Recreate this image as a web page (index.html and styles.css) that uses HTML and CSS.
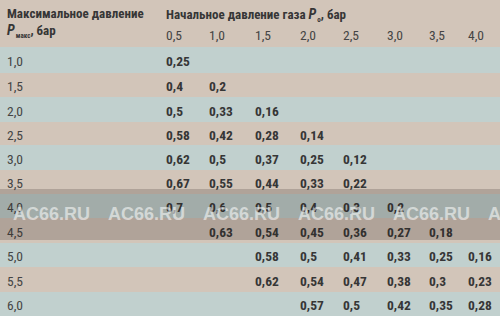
FILE: index.html
```html
<!DOCTYPE html>
<html lang="ru">
<head>
<meta charset="utf-8">
<link rel="stylesheet" href="styles.css">
</head>
<body>
<div class="page">
  <div class="grid">
    <div class="hd-left">Максимальное давление<br><i>P</i><sub>макс</sub>, бар</div>
    <div class="hd-top">Начальное давление газа <i>P</i><sub>o</sub>, бар</div>
    <div class="lbl">0,5</div><div class="lbl">1,0</div><div class="lbl">1,5</div><div class="lbl">2,0</div><div class="lbl">2,5</div><div class="lbl">3,0</div><div class="lbl">3,5</div><div class="lbl">4,0</div>

    <div class="row t"><span class="k">1,0</span><b>0,25</b><b></b><b></b><b></b><b></b><b></b><b></b><b></b></div>
    <div class="row s"><span class="k">1,5</span><b>0,4</b><b>0,2</b><b></b><b></b><b></b><b></b><b></b><b></b></div>
    <div class="row t"><span class="k">2,0</span><b>0,5</b><b>0,33</b><b>0,16</b><b></b><b></b><b></b><b></b><b></b></div>
    <div class="row s"><span class="k">2,5</span><b>0,58</b><b>0,42</b><b>0,28</b><b>0,14</b><b></b><b></b><b></b><b></b></div>
    <div class="row t"><span class="k">3,0</span><b>0,62</b><b>0,5</b><b>0,37</b><b>0,25</b><b>0,12</b><b></b><b></b><b></b></div>
    <div class="row s"><span class="k">3,5</span><b>0,67</b><b>0,55</b><b>0,44</b><b>0,33</b><b>0,22</b><b></b><b></b><b></b></div>
    <div class="row t"><span class="k">4,0</span><b>0,7</b><b>0,6</b><b>0,5</b><b>0,4</b><b>0,3</b><b>0,2</b><b></b><b></b></div>
    <div class="row s"><span class="k">4,5</span><b></b><b>0,63</b><b>0,54</b><b>0,45</b><b>0,36</b><b>0,27</b><b>0,18</b><b></b></div>
    <div class="row t"><span class="k">5,0</span><b></b><b></b><b>0,58</b><b>0,5</b><b>0,41</b><b>0,33</b><b>0,25</b><b>0,16</b></div>
    <div class="row s"><span class="k">5,5</span><b></b><b></b><b>0,62</b><b>0,54</b><b>0,47</b><b>0,38</b><b>0,3</b><b>0,23</b></div>
    <div class="row t"><span class="k">6,0</span><b></b><b></b><b></b><b>0,57</b><b>0,5</b><b>0,42</b><b>0,35</b><b>0,28</b></div>
  </div>
  <div class="wm">
    <span>AC66.RU</span><span>AC66.RU</span><span>AC66.RU</span><span>AC66.RU</span><span>AC66.RU</span><span>AC66.RU</span>
  </div>
</div>
</body>
</html>
```
FILE: styles.css
```css
html, body {
  margin: 0;
  padding: 0;
}
body {
  width: 500px;
  height: 316px;
  overflow: hidden;
  background: #d2c5b9;
  font-family: "Roboto", "Liberation Sans", sans-serif;
  font-stretch: 75%;
  color: #363636;
}
.page {
  position: relative;
  width: 500px;
  height: 316px;
}
.grid {
  display: grid;
  grid-template-columns: 166px 43px 46px 45px 43px 44px 42px 39px 32px;
  grid-template-rows: 24px 23px 26px 24px 25px 23px 25px 24px 24px 25px 24px 25px 24px;
}
.hd-left {
  grid-column: 1;
  grid-row: 1 / span 2;
  padding: 6px 0 0 7px;
  font-weight: bold;
  font-size: 13px;
  line-height: 16px;
  white-space: nowrap;
}
.hd-left sub, .hd-top sub {
  font-size: 7px;
  font-weight: bold;
  vertical-align: -3px;
  line-height: 0;
  margin-left: 1px;
}
.hd-left i, .hd-top i {
  font-size: 14px;
}
.hd-top {
  grid-column: 2 / span 8;
  grid-row: 1;
  padding: 6px 0 0 0;
  font-weight: bold;
  font-size: 13px;
  line-height: 16px;
  white-space: nowrap;
}
.lbl {
  grid-row: 2;
  font-size: 13.5px;
  line-height: 16px;
  padding-top: 3px;
  color: #444;
}
.row {
  grid-column: 1 / -1;
  display: grid;
  grid-template-columns: subgrid;
  align-items: center;
  font-size: 13.5px;
  line-height: 16px;
}
.row.t { background: #c1d0ce; }
.row.s { background: #d2c5b9; }
.row .k {
  padding: 2px 0 0 7px;
  color: #444;
}
.row b {
  padding-top: 2px;
  font-weight: bold;
}
.wm {
  position: absolute;
  left: 0;
  top: 189px;
  width: 500px;
  height: 51px;
  background: rgba(40, 30, 25, 0.2);
  display: flex;
  gap: 20px;
  padding: 15px 0 0 13px;
  box-sizing: border-box;
  overflow: hidden;
  white-space: nowrap;
}
.wm span {
  font-family: "Liberation Sans", Arial, sans-serif;
  font-stretch: normal;
  font-weight: bold;
  font-size: 18px;
  line-height: 20px;
  color: rgba(255, 255, 255, 0.55);
  width: 75px;
  flex: none;
}
```
